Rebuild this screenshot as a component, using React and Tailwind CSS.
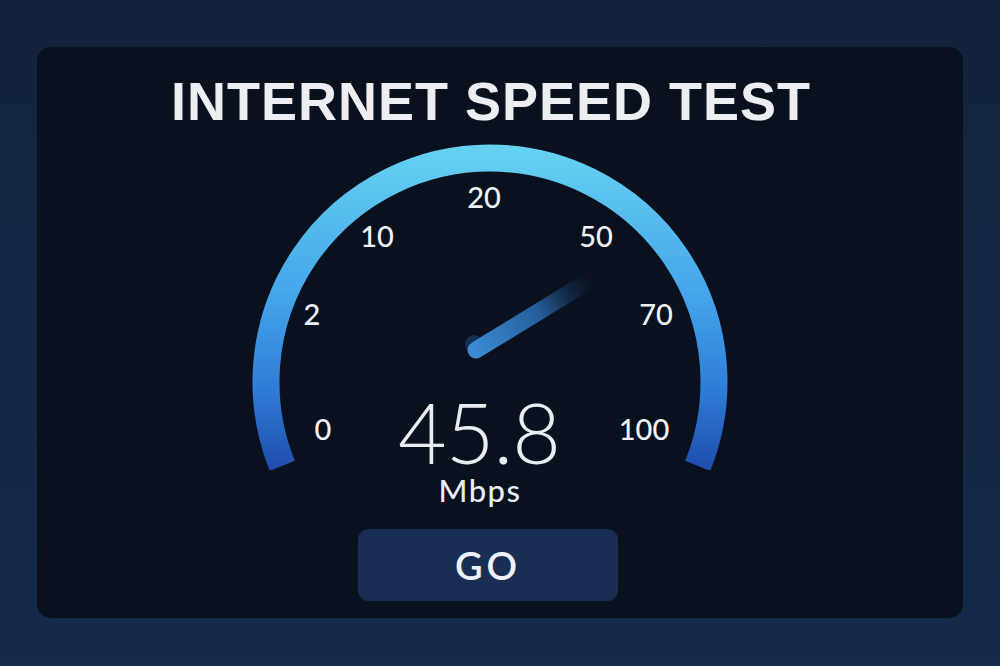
import React from "react";

// gauge geometry in page coordinates (svg viewBox matches)
const labels = [
  { v: "0", x: 323, y: 440 },
  { v: "2", x: 312, y: 325 },
  { v: "10", x: 377, y: 247 },
  { v: "20", x: 484, y: 208 },
  { v: "50", x: 596, y: 247 },
  { v: "70", x: 656, y: 325 },
  { v: "100", x: 644, y: 440 },
];

function Gauge() {
  return (
    <svg
      width="500"
      height="330"
      viewBox="250 140 500 330"
      className="block shrink-0"
    >
      <defs>
        <linearGradient id="arc" gradientUnits="userSpaceOnUse" x1="0" y1="145" x2="0" y2="470">
          <stop offset="0" stopColor="#66d2f1" />
          <stop offset="0.45" stopColor="#45a6ea" />
          <stop offset="0.75" stopColor="#2f7dd6" />
          <stop offset="1" stopColor="#1f4cae" />
        </linearGradient>
        <linearGradient id="needle" gradientUnits="userSpaceOnUse" x1="476" y1="350" x2="590" y2="280">
          <stop offset="0" stopColor="#3a8bd2" />
          <stop offset="0.55" stopColor="#2a6cb0" stopOpacity="0.85" />
          <stop offset="1" stopColor="#17406e" stopOpacity="0" />
        </linearGradient>
      </defs>

      <path
        d="M 282.3 465.9 A 224 224 0 1 1 697.7 465.9"
        fill="none"
        stroke="url(#arc)"
        strokeWidth="27"
      />

      <circle cx="474" cy="344" r="9" fill="#16304f" />
      <line
        x1="476"
        y1="350"
        x2="592"
        y2="279"
        stroke="url(#needle)"
        strokeWidth="17"
        strokeLinecap="round"
      />

      {labels.map((l) => (
        <text
          key={l.v}
          x={l.x}
          y={l.y}
          textAnchor="middle"
          fill="#eef2f7"
          fontSize="29"
          fontWeight="500"
          fontFamily="Lato, 'Liberation Sans', sans-serif"
        >
          {l.v}
        </text>
      ))}
    </svg>
  );
}

function App() {
  return (
    <div className="w-full h-[666px] bg-gradient-to-b from-[#13223b] to-[#142b4b] pt-[47px] pl-[37px] font-['Lato','Liberation_Sans',sans-serif]">
      <div className="w-[926px] h-[571px] rounded-[14px] bg-[#0a111e] flex flex-col items-center">
        {/* Titre */}
        <h1 className="mt-[27px] mr-[18px] text-[54px] leading-none font-bold text-[#eceef2] font-['Liberation_Sans',sans-serif] tracking-[1px]">
          INTERNET SPEED TEST
        </h1>

        <div className="mt-[12px]">
          <Gauge />
        </div>

        {/* Valeur */}
        <div className="-mt-[73px] mr-[42px] text-[84px] leading-[70px] font-light text-[#e9edf2] tracking-[-1px]">
          45.8
        </div>
        <div className="mt-[8px] mr-[40px] text-[31px] leading-none font-medium text-[#e9edf2] tracking-[1.5px]">
          Mbps
        </div>

        <button className="mt-[23px] mr-[24px] w-[260px] h-[72px] rounded-[11px] bg-[#182f53] text-[#eef1f6] text-[38px] font-semibold tracking-[4px]">
          GO
        </button>
      </div>
    </div>
  );
}

export default App;
